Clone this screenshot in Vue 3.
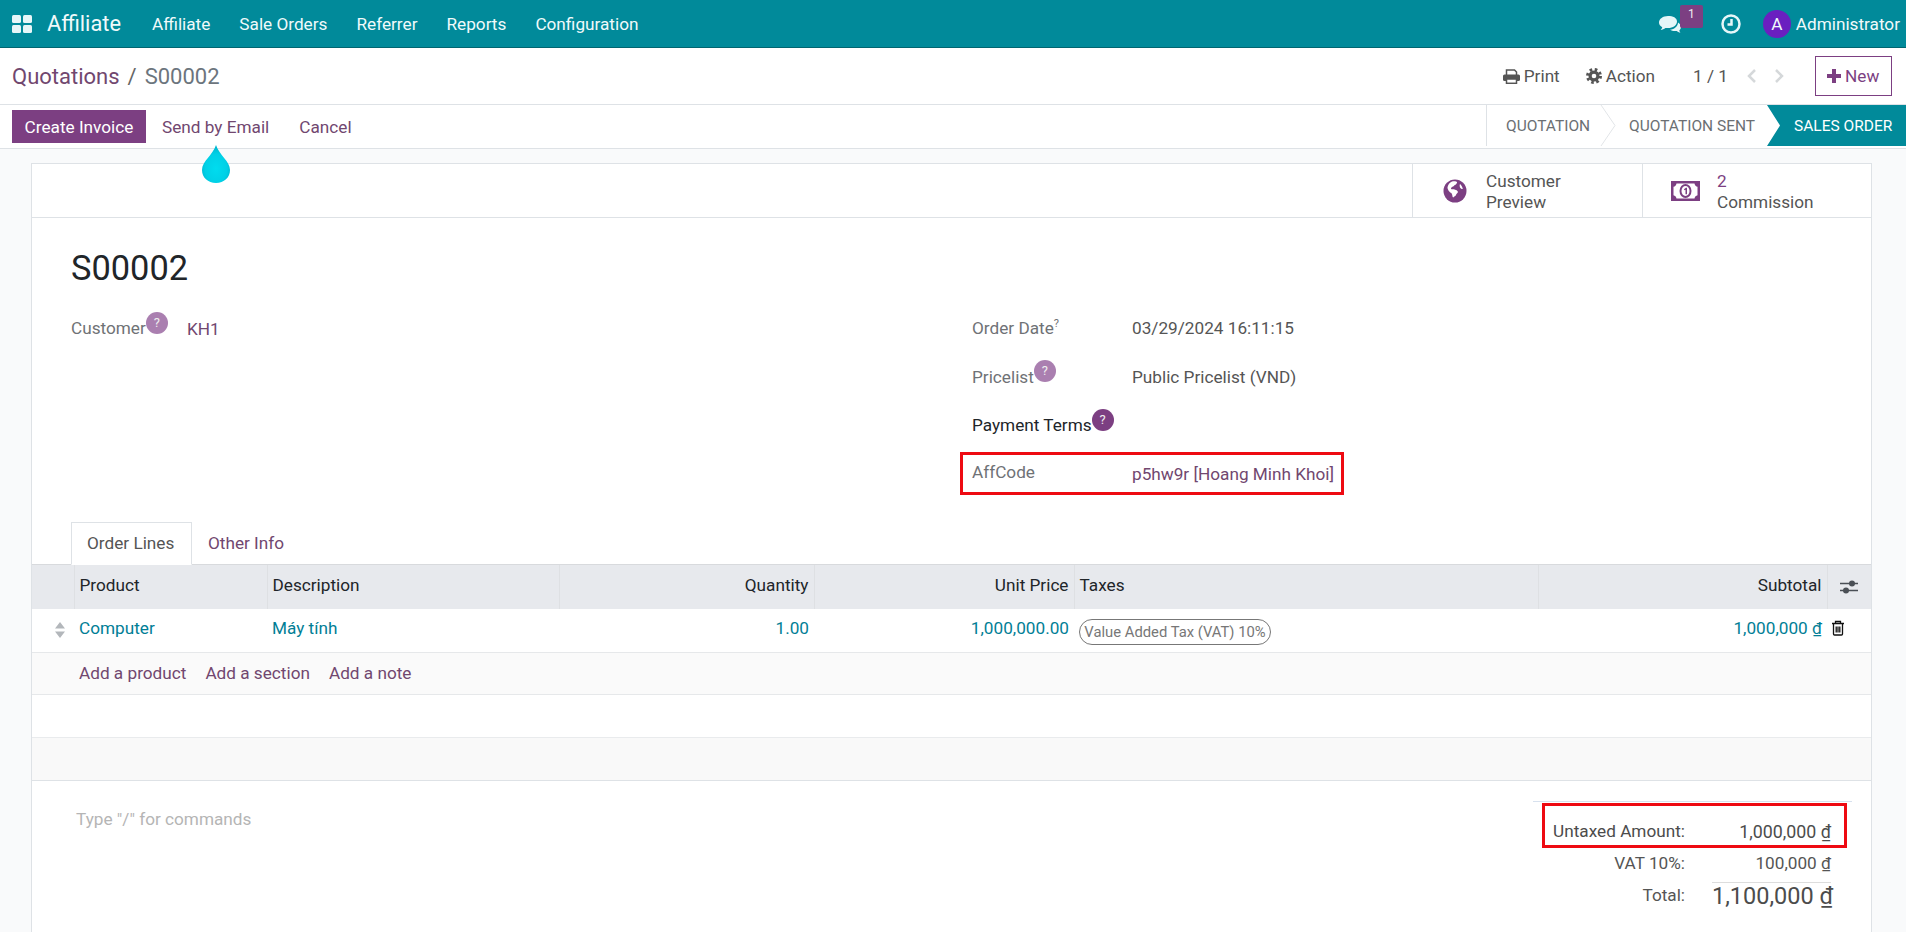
<template>
  <div class="app">
    <header class="navbar">
      <svg class="apps-icon" viewBox="0 0 20 18" width="20" height="18">
        <rect x="0" y="0" width="9" height="8" rx="1.5" />
        <rect x="11" y="0" width="9" height="8" rx="1.5" />
        <rect x="0" y="10" width="9" height="8" rx="1.5" />
        <rect x="11" y="10" width="9" height="8" rx="1.5" />
      </svg>
      <span class="brand">Affiliate</span>
      <nav class="menu">
        <a v-for="item in menuItems" :key="item">{{ item }}</a>
      </nav>
      <div class="systray">
        <div class="chat">
          <svg viewBox="0 0 22 17" width="22" height="17">
            <path d="M9 0C4 0 0 2.900 0 6.500c0 1.900 1.300 3.600 3.300 4.800-.3 1-.9 1.900-1.700 2.600 1.800-.2 3.500-.9 4.800-2 .8.100 1.700.200 2.600.200 5 0 9-2.900 9-6.600S14 0 9 0z" />
            <path d="M19 6.500c.1 3.600-3.500 6.700-8 7.300 1.400.9 3 1.300 5 1.300.6 0 1.100-.1 1.700-.2.900.8 2.200 1.500 3.800 1.700-.6-.7-1-1.400-1.200-2.200.8-.8 1.700-2 1.700-3.400 0-1.800-1.100-3.400-3-4.500z" />
          </svg>
          <span class="chat-badge">1</span>
        </div>
        <svg class="clock" viewBox="0 0 20 20" width="20" height="20">
          <circle cx="10" cy="10" r="8.500" />
          <path d="M10.500 5v5.500H6.500" />
        </svg>
        <span class="avatar">A</span>
        <span class="user">Administrator</span>
      </div>
    </header>

    <section class="control">
      <div class="crumbs">
        <a class="crumb-link">Quotations</a>
        <span class="crumb-sep">/</span>
        <span class="crumb-current">S00002</span>
      </div>
      <div class="control-right">
        <span class="tool">
          <svg viewBox="0 0 17 15" width="17" height="15">
            <path d="M3.500 6V1h8l2 2v3" fill="none" stroke="#555" stroke-width="1.500" />
            <rect x="0" y="5.500" width="17" height="6.500" rx="1.500" fill="#555" />
            <rect x="3.500" y="10" width="10" height="4.300" fill="#fff" stroke="#555" stroke-width="1.500" />
          </svg>
          Print
        </span>
        <span class="tool tool-action">
          <svg viewBox="0 0 16 16" width="16" height="16">
            <circle cx="8" cy="8" r="5.500" fill="#555" />
            <circle cx="8" cy="8" r="6.500" fill="none" stroke="#555" stroke-width="3" stroke-dasharray="2.550 2.550" />
            <circle cx="8" cy="8" r="2.300" fill="#fff" />
          </svg>
          Action
        </span>
        <span class="pager">1 / 1</span>
        <svg class="pager-arrow" viewBox="0 0 11 16" width="11" height="16"><path d="M9 2L3 8l6 6" /></svg>
        <svg class="pager-arrow pager-next" viewBox="0 0 11 16" width="11" height="16"><path d="M2 2l6 6-6 6" /></svg>
        <button class="new-btn">
          <svg viewBox="0 0 14 14" width="14" height="14"><path d="M5 0h4v5h5v4H9v5H5V9H0V5h5z" /></svg>
          New
        </button>
      </div>
    </section>

    <section class="actions">
      <div class="action-buttons">
        <button class="primary-btn">Create Invoice</button>
        <a class="action-link">Send by Email</a>
        <a class="action-link">Cancel</a>
      </div>
      <div class="statusbar">
        <span class="stage stage-first">QUOTATION</span>
        <span class="stage stage-sent">
          <svg class="stage-chevron" viewBox="0 0 16 41" width="16" height="41">
            <path d="M1 0l14 20.500L1 41" />
          </svg>
          QUOTATION SENT
        </span>
        <span class="stage stage-active">SALES ORDER</span>
      </div>
    </section>

    <svg class="droplet" viewBox="0 0 28 38" width="28" height="38">
      <defs>
        <radialGradient id="drop" cx="50%" cy="62%" r="55%">
          <stop offset="0%" stop-color="#00dcef" />
          <stop offset="70%" stop-color="#00d0e6" />
          <stop offset="100%" stop-color="#00b9d2" />
        </radialGradient>
      </defs>
      <path d="M14 0C17 10 28 16 28 25c0 7.500-6 13-14 13S0 32.500 0 25C0 16 11 10 14 0z" fill="url(#drop)" />
    </svg>

    <main class="sheet">
      <div class="button-box">
        <div class="stat-btn">
          <svg viewBox="0 0 24 24" width="24" height="24">
            <circle cx="12" cy="12" r="11.500" fill="#7c3f82" />
            <path d="M9 2.500c2-.6 4.300-.4 5 .5.300 1.300-.8 2-1.500 2.800-1.200.2-1.300 1.500-2.700 1.700-.6 1-2.300 1-1.700 2.500 1.200.9 2.700-.4 3.700.7 1.700-.1 2.800 1 3.200 2.300-.7 1.500-2 2.200-2.400 3.700-1.300.6-2 1.500-2.500 1.800-1-1-.5-2.600-1.300-3.600-.2-1.200-1.800-1-2.500-2.300-.9-1.300-1.900-2.700-1.800-4.400C5 5.700 6.500 3.400 9 2.500z" fill="#fff" />
            <path d="M17 5c1.400 1.200 2.400 3 2.800 5-.9.300-1.800-.3-2.300-1-.7-.3-1.200-2.800-.5-4z" fill="#fff" />
          </svg>
          <div class="stat-text"><span>Customer</span><span>Preview</span></div>
        </div>
        <div class="stat-btn stat-commission">
          <svg viewBox="0 0 29 20" width="29" height="20">
            <rect width="29" height="20" fill="#7c3f82" />
            <path d="M5.500 2.500h18c.3 1.800 1.500 3 3 3.300v8.400c-1.500.3-2.700 1.500-3 3.300h-18c-.3-1.800-1.500-3-3-3.300V5.800c1.500-.3 2.700-1.500 3-3.300z" fill="#fff" />
            <ellipse cx="14.500" cy="10" rx="6" ry="7" fill="#7c3f82" />
            <ellipse cx="14.500" cy="10" rx="4" ry="5" fill="#fff" />
            <path d="M12.900 8.200l2-1.400h1.100v6.400h-1.500V8.700l-.9.600z" fill="#7c3f82" />
          </svg>
          <div class="stat-text"><span class="stat-count">2</span><span>Commission</span></div>
        </div>
      </div>

      <h1 class="title">S00002</h1>

      <div class="form-groups">
        <div class="group group-left">
          <div class="label">Customer<span class="help help-light">?</span></div>
          <a class="value-link value-customer">KH1</a>
        </div>
        <div class="group group-right">
          <div class="label">Order Date<sup class="sup">?</sup></div>
          <div class="value">03/29/2024 16:11:15</div>
          <div class="label">Pricelist<span class="help help-light">?</span></div>
          <div class="value">Public Pricelist (VND)</div>
          <div class="label label-strong">Payment Terms<span class="help">?</span></div>
          <div class="value"></div>
          <div class="label aff-label">AffCode<span class="red-mark aff-mark"></span></div>
          <a class="value-link aff-value">p5hw9r [Hoang Minh Khoi]</a>
        </div>
      </div>

      <div class="tabs">
        <span class="tab tab-active">Order Lines</span>
        <span class="tab">Other Info</span>
      </div>

      <table class="lines">
        <colgroup>
          <col v-for="w in colWidths" :key="w" :style="{ width: w + 'px' }" />
        </colgroup>
        <thead>
          <tr>
            <th></th>
            <th>Product</th>
            <th>Description</th>
            <th class="num">Quantity</th>
            <th class="num">Unit Price</th>
            <th>Taxes</th>
            <th class="num">Subtotal</th>
            <th class="opt-cell">
              <svg viewBox="0 0 18 16" width="18" height="16">
                <path d="M0 4.500h18M0 11.500h18" stroke="#4a4f55" stroke-width="1.500" />
                <circle cx="12" cy="4.500" r="3" fill="#4a4f55" />
                <circle cx="6" cy="11.500" r="3" fill="#4a4f55" />
              </svg>
            </th>
          </tr>
        </thead>
        <tbody>
          <tr class="line-row">
            <td class="handle-cell">
              <svg viewBox="0 0 12 16" width="12" height="16">
                <path d="M6 0l5 6.500H1zM6 16l-5-6.500h10z" fill="#b3b7bb" />
              </svg>
            </td>
            <td>Computer</td>
            <td>Máy tính</td>
            <td class="num">1.00</td>
            <td class="num">1,000,000.00</td>
            <td><span class="tax-tag">Value Added Tax (VAT) 10%</span></td>
            <td class="num">1,000,000 <u>₫</u></td>
            <td class="trash-cell">
              <svg viewBox="0 0 14 16" width="14" height="16">
                <path d="M1 3.500h12M4.500 3.500V1.500h5v2M2.500 3.500v10.500a1 1 0 0 0 1 1h7a1 1 0 0 0 1-1V3.500M5.200 6.500v6M7 6.500v6M8.800 6.500v6" fill="none" stroke="#111" stroke-width="1.300" />
              </svg>
            </td>
          </tr>
          <tr class="add-row">
            <td></td>
            <td colspan="7">
              <a>Add a product</a><a>Add a section</a><a>Add a note</a>
            </td>
          </tr>
          <tr class="empty-row"><td colspan="8"></td></tr>
          <tr class="empty-row empty-grey"><td colspan="8"></td></tr>
        </tbody>
      </table>

      <div class="bottom">
        <div class="notes">Type "/" for commands</div>
        <div class="totals">
          <span class="red-mark total-mark"></span>
          <div class="total-row total-first">
            <span>Untaxed Amount:</span>
            <span class="amount amount-first">1,000,000 <u>₫</u></span>
          </div>
          <div class="total-row total-vat">
            <span>VAT 10%:</span>
            <span class="amount">100,000 <u>₫</u></span>
          </div>
          <div class="total-row total-sum">
            <span class="sum-label">Total:</span>
            <span class="amount amount-big">1,100,000 <u>₫</u></span>
          </div>
        </div>
      </div>
    </main>
  </div>
</template>

<script setup>
const menuItems = ['Affiliate', 'Sale Orders', 'Referrer', 'Reports', 'Configuration'];
const colWidths = [42, 193, 292, 255, 260, 464, 289, 44];
</script>

<style>
html,
body {
  margin: 0;
  background: #f9fafb;
}
</style>

<style scoped>
.app {
  position: relative;
  height: 932px;
  overflow: hidden;
  background: #f9fafb;
  font-family: Roboto, "Noto Sans", sans-serif;
  font-size: 17.2px;
  color: #4c4c4c;
}

a {
  cursor: pointer;
}

/* Navbar */
.navbar {
  display: flex;
  align-items: center;
  box-sizing: border-box;
  height: 48px;
  padding-left: 12px;
  background: #018a9a;
  border-bottom: 1px solid #016570;
  color: #f0fafb;
}

.apps-icon {
  fill: #e6f6f8;
  flex: none;
}

.brand {
  margin-left: 15px;
  font-size: 21.800px;
  width: 90px;
}

.menu {
  display: flex;
  gap: 29px;
  margin-left: 15px;
}

.systray {
  display: flex;
  align-items: center;
  margin-left: auto;
  padding-right: 6px;
}

.chat {
  position: relative;
  display: flex;
  width: 56px;
  margin-top: 1px;
  fill: #e6f6f8;
}

.chat-badge {
  position: absolute;
  left: 21px;
  top: -11px;
  width: 23px;
  height: 23px;
  background: #7c3f82;
  border-radius: 2px;
  font-size: 12px;
  line-height: 19px;
  text-align: center;
  color: #eee;
}

.clock {
  margin-left: 6px;
  fill: none;
  stroke: #e6f6f8;
  stroke-width: 2.500;
}

.avatar {
  width: 28px;
  height: 28px;
  margin-left: 22px;
  border-radius: 50%;
  background: #6a1fc0;
  line-height: 28px;
  text-align: center;
}

.user {
  margin-left: 5px;
}

/* Control panel */
.control {
  display: flex;
  align-items: center;
  justify-content: space-between;
  box-sizing: border-box;
  height: 57px;
  padding: 0 14px 0 12px;
  background: #fff;
  border-bottom: 1px solid #dee2e6;
}

.crumbs {
  display: flex;
  align-items: center;
  font-size: 22px;
}

.crumb-link {
  color: #71476f;
}

.crumb-sep {
  margin: 0 8px;
  color: #666;
}

.crumb-current {
  color: #6c757d;
}

.control-right {
  display: flex;
  align-items: center;
}

.tool {
  display: flex;
  align-items: center;
  gap: 4px;
  color: #555;
}

.tool-action {
  margin-left: 26px;
}

.pager {
  margin-left: 38px;
  color: #555;
}

.pager-arrow {
  margin-left: 18px;
  fill: none;
  stroke: #d5d8da;
  stroke-width: 2.500;
}

.pager-next {
  margin-left: 17px;
}

.new-btn {
  display: flex;
  align-items: center;
  gap: 4px;
  box-sizing: border-box;
  width: 77px;
  height: 40px;
  margin-left: 30px;
  padding: 0 0 0 11px;
  background: #fff;
  border: 1px solid #7c3f82;
  font: inherit;
  color: #7c3f82;
  fill: #7c3f82;
}

.actions {
  display: flex;
  justify-content: space-between;
  box-sizing: border-box;
  height: 44px;
  background: #fff;
  border-bottom: 1px solid #dee2e6;
}

.action-buttons {
  display: flex;
  align-items: center;
  box-sizing: content-box;
  height: 33px;
  padding: 5px 0 0 12px;
}

.primary-btn {
  width: 134px;
  height: 33px;
  padding: 0;
  border: 0;
  background: #7c3f82;
  font: inherit;
  color: #fff;
}

.action-link {
  margin-left: 30px;
  color: #71476f;
}

.action-link:first-of-type {
  margin-left: 16px;
}

.statusbar {
  display: flex;
  height: 41px;
  border-left: 1px solid #dee2e6;
  color: #6b6f73;
}

.stage {
  position: relative;
  display: flex;
  align-items: center;
  font-size: 15.500px;
}

.stage-first {
  padding-left: 19px;
  width: 124px;
  box-sizing: border-box;
}

.stage-sent {
  width: 156px;
  box-sizing: border-box;
  padding-left: 18px;
}

.stage-chevron {
  position: absolute;
  left: -11px;
  top: 0;
  fill: none;
  stroke: #e2e5e8;
}

.stage-active {
  width: 139px;
  box-sizing: border-box;
  padding-left: 27px;
  background: #018a9a;
  color: #fff;
  clip-path: polygon(0 0, 100% 0, 100% 100%, 0 100%, 13px 50%);
}

.droplet {
  position: absolute;
  left: 202px;
  top: 145px;
}

/* Sheet */
.sheet {
  margin: 14px 34px 0 31px;
  background: #fff;
  border: 1px solid #dee2e6;
  border-bottom: 0;
}

.button-box {
  display: flex;
  justify-content: flex-end;
  height: 53px;
  border-bottom: 1px solid #dee2e6;
}

.stat-btn {
  display: flex;
  align-items: center;
  box-sizing: border-box;
  width: 230px;
  padding-left: 30px;
  gap: 19px;
  border-left: 1px solid #dee2e6;
}

.stat-commission {
  width: 229px;
  padding-left: 28px;
  gap: 17px;
}

.stat-text {
  display: flex;
  flex-direction: column;
  padding-top: 2px;
  line-height: 21px;
  color: #555;
}

.stat-count {
  color: #7c3f82;
}

.title {
  margin: 28px 0 0 39px;
  font-size: 34.400px;
  font-weight: 400;
  line-height: 44px;
  color: #212529;
}

.form-groups {
  display: flex;
  margin: 14px 0 0 39px;
  height: 194px;
}

.group {
  display: grid;
  grid-auto-rows: 48.600px;
  align-items: center;
  align-content: start;
}

.group-left {
  grid-template-columns: 116px 1fr;
  width: 901px;
  flex: none;
}

.group-right {
  grid-template-columns: 160px 1fr;
}

.label {
  position: relative;
  color: #6f7276;
}

.label-strong {
  color: #212529;
}

.help {
  display: inline-block;
  width: 22px;
  height: 22px;
  margin: -12px 0;
  border-radius: 50%;
  background: #7c3f82;
  color: #eee;
  font-size: 13px;
  line-height: 22px;
  text-align: center;
  vertical-align: 7.500px;
}

.help-light {
  background: #aa7fb0;
}

.sup {
  font-size: 11px;
  line-height: 0;
}

.value {
  color: #555;
}

.value-link {
  color: #71476f;
}

.value-customer {
  padding-top: 2px;
}

.aff-value {
  padding-top: 0;
}

.red-mark {
  position: absolute;
  box-sizing: border-box;
  border: 3px solid #ee0a12;
  pointer-events: none;
}

.aff-mark {
  left: -12px;
  top: 2px;
  width: 384px;
  height: 43px;
}

.aff-label {
  align-self: stretch;
  line-height: 44px;
}

.tabs {
  display: flex;
  position: relative;
  z-index: 1;
  margin: 24px 0 -1px 39px;
  height: 43px;
}

.tab {
  box-sizing: border-box;
  padding: 0 15px;
  line-height: 41px;
  white-space: nowrap;
  color: #71476f;
  border: 1px solid transparent;
}

.tab-active {
  width: 121px;
  background: #fff;
  border-color: #dee2e6;
  border-bottom-color: #fff;
  color: #555;
}

/* Order lines */
.lines {
  width: 100%;
  table-layout: fixed;
  border-collapse: collapse;
}

.lines th {
  height: 44px;
  box-sizing: border-box;
  padding: 0 5px 3px;
  background: #e7e9ed;
  border-top: 1px solid #d8dadd;
  border-left: 1px solid #dee0e3;
  text-align: left;
  font-weight: 400;
  color: #212529;
}

.lines th:first-child {
  border-left: 0;
}

.lines th.num,
.lines td.num {
  text-align: right;
}

.lines th.opt-cell {
  padding: 0 0 2px;
  text-align: center;
}

.opt-cell svg {
  vertical-align: middle;
}

.line-row td {
  height: 44px;
  box-sizing: border-box;
  padding: 0 5px 4px;
  border-bottom: 1px solid #e6e8ea;
  color: #017e96;
}

.line-row td.handle-cell {
  padding: 0 0 0 22px;
}

.handle-cell svg,
.trash-cell svg {
  display: block;
}

.line-row td.trash-cell {
  padding: 0 0 4px 4px;
}

.tax-tag {
  display: inline-block;
  box-sizing: border-box;
  width: 192px;
  height: 26px;
  margin-top: 7px;
  border: 1px solid #777;
  border-radius: 13px;
  font-size: 14.800px;
  line-height: 24px;
  text-align: center;
  white-space: nowrap;
  color: #777;
}

.add-row td {
  height: 42px;
  box-sizing: border-box;
  padding: 0 5px 1px;
  background: #fafafa;
  border-bottom: 1px solid #e6e8ea;
}

.add-row a {
  margin-right: 19px;
  color: #71476f;
}

.empty-row td {
  height: 43px;
  box-sizing: border-box;
  border-bottom: 1px solid #e9ebed;
  background: #fff;
}

.empty-grey td {
  background: #f9f9f9;
  border-bottom-color: #dee2e6;
}

.bottom {
  display: flex;
  justify-content: space-between;
  padding: 20px 19px 0 44px;
  background: #fff;
  height: 160px;
}

.notes {
  padding-top: 8px;
  color: #b5b5b5;
}

.totals {
  position: relative;
  box-sizing: border-box;
  width: 319px;
  height: 120px;
  padding: 0 21px 0 0;
  border-top: 1px solid #d7e1ee;
}

.total-mark {
  left: 9px;
  top: 1px;
  width: 305px;
  height: 45px;
}

.total-row {
  display: grid;
  grid-template-columns: 152px 1fr;
  align-items: center;
  text-align: right;
  color: #555;
}

.total-first {
  height: 45px;
  padding-top: 13px;
  box-sizing: border-box;
  color: #4c4c4c;
}

.total-vat {
  height: 35px;
  padding-bottom: 3px;
  box-sizing: border-box;
}

.total-sum {
  height: 30px;
  align-items: start;
}

.sum-label {
  line-height: 26px;
}

.amount {
  justify-self: end;
  white-space: nowrap;
}

.amount-first {
  font-size: 17.800px;
}

.amount-big {
  box-sizing: border-box;
  width: 119px;
  border-top: 1px solid #ddd;
  font-size: 23.500px;
  line-height: 27px;
  color: #4c4c4c;
}
</style>
